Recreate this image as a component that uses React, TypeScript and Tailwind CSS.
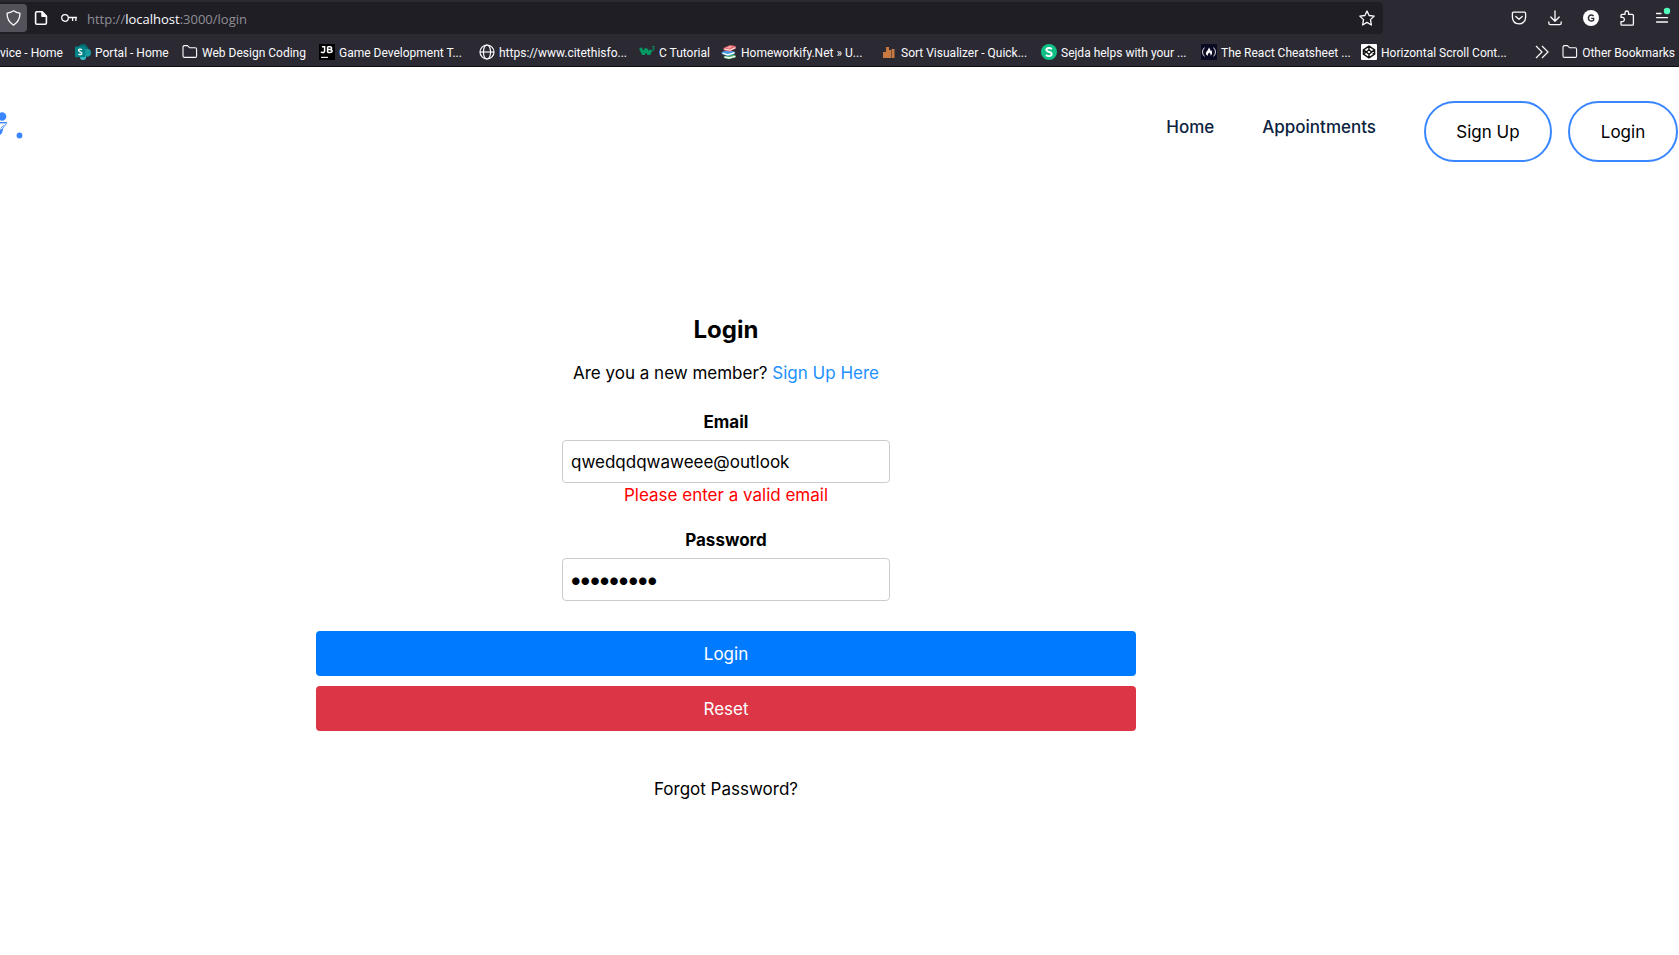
import type { ReactNode } from "react";

type Bookmark = { label: string; width: string; icon: ReactNode };

const FolderIcon = () => (
  <svg className="size-4 shrink-0" viewBox="0 0 16 16" fill="none" stroke="#fbfbfe" strokeWidth="1.1">
    <path d="M1 3.2Q1 1.6 2.6 1.6H5.4L7.6 3.8H13.2Q14.6 3.8 14.6 5.2V12Q14.6 13.4 13.2 13.4H2.4Q1 13.4 1 12Z" />
  </svg>
);

const SharePointIcon = () => (
  <svg className="size-4 shrink-0" viewBox="0 0 16 16">
    <circle cx="8" cy="5" r="5" fill="#036c70" />
    <circle cx="12" cy="8.7" r="4" fill="#1a9ba1" />
    <circle cx="8" cy="13" r="3" fill="#37c6d0" />
    <rect x="0" y="2.6" width="10.4" height="10.6" rx="0.8" fill="#038387" />
    <path d="M7 5.6Q4 4.4 3.6 6.2Q3.6 7.3 5.2 7.8Q7.2 8.5 6.9 9.7Q6.2 11.2 3.4 10.1" fill="none" stroke="#fff" strokeWidth="1.4" />
  </svg>
);

const JetBrainsIcon = () => (
  <svg className="size-4 shrink-0" viewBox="0 0 16 16">
    <rect width="16" height="16" fill="#000" />
    <path d="M3 2.8H5.6V7.2Q5.4 8.8 3.6 8.6Q2.6 8.6 2 7.8M8.6 2.8V8.6M8.6 2.8H11Q12.8 3 12.6 4.3Q12.4 5.5 10.8 5.6H8.8M10.8 5.6Q13.3 5.7 13.2 7.2Q13 8.6 11 8.6H8.6" fill="none" stroke="#fff" strokeWidth="1.5" />
    <rect x="2" y="12.8" width="7" height="1.1" fill="#fff" />
  </svg>
);

const GlobeIcon = () => (
  <svg className="size-4 shrink-0" viewBox="0 0 16 16" fill="none" stroke="#fbfbfe" strokeWidth="1.2">
    <circle cx="8" cy="8" r="7" />
    <ellipse cx="8" cy="8" rx="3.6" ry="7" />
    <path d="M1 8H15" />
  </svg>
);

const W3Icon = () => (
  <svg className="size-4 shrink-0" viewBox="0 0 16 16" fill="none" stroke="#059862">
    <path d="M1.4 4L4.4 10.4L7 5L9.8 10.4L12 6" strokeWidth="3" strokeLinejoin="bevel" />
    <path d="M13 2.6H15.2L14 4.3Q15.6 4.5 15 5.8Q14.2 6.6 13 6" strokeWidth="0.9" />
  </svg>
);

const BooksIcon = () => (
  <svg className="size-4 shrink-0" viewBox="0 0 16 16">
    <path d="M3 12L11 9.6L14.6 11.2V13.4L8 15.2L2.6 14Z" fill="#4cae6a" />
    <path d="M3.6 13L8 14L14.4 12.4" stroke="#fff" strokeWidth="1.3" fill="none" />
    <path d="M0.6 8L5 6.4L13.6 7.4V9.8L7 12L0.8 10Z" fill="#4a9ce0" />
    <path d="M1.6 9.3L7 10.8L13.6 8.6" stroke="#fff" strokeWidth="1.4" fill="none" />
    <path d="M2.4 4L9 1L14.6 2V4.6L9 7.4L2.8 6.2Z" fill="#e2646a" />
    <path d="M3.4 5.2L9 6.2L14.4 3.6" stroke="#fbdcdc" strokeWidth="1.2" fill="none" />
    <path d="M5 3.7L9.2 2L12.4 2.6L8 4.4Z" fill="#f3a3a3" />
  </svg>
);

const BarsIcon = () => (
  <svg className="size-4 shrink-0" viewBox="0 0 16 16" fill="#c87941">
    <rect x="2" y="8" width="3" height="6" />
    <rect x="5" y="3" width="3" height="11" />
    <rect x="8" y="6" width="2" height="8" />
    <rect x="10.5" y="5" width="3" height="9" />
  </svg>
);

const SejdaIcon = () => (
  <svg className="size-4 shrink-0" viewBox="0 0 16 16">
    <circle cx="8" cy="8" r="8" fill="#10bf85" />
    <path d="M11 4.9Q7.6 3.1 5.7 4.7Q4.6 6.6 7.2 7.6L9.4 8.4Q11.6 9.8 10.1 11.5Q7.8 12.9 4.8 11.1" fill="none" stroke="#fff" strokeWidth="1.9" />
  </svg>
);

const FreeCodeCampIcon = () => (
  <svg className="size-4 shrink-0" viewBox="0 0 16 16">
    <rect width="16" height="16" fill="#0a0a23" />
    <path d="M3.4 3.6Q-0.4 8 3.4 12.4M12.6 3.6Q16.4 8 12.6 12.4" fill="none" stroke="#dfdfe2" strokeWidth="1" />
    <path d="M8 3.6Q9.4 5.2 9.6 7Q10.4 6.7 10.3 6Q12.2 9.6 9.6 11.8Q10 9.6 8.2 8.6Q6.4 9.8 6.8 11.8Q3.6 10.4 5.6 7.4Q7.4 5.8 8 3.6Z" fill="#fff" />
  </svg>
);

const CodePenIcon = () => (
  <svg className="size-4 shrink-0" viewBox="0 0 16 16">
    <rect width="16" height="16" rx="1" fill="#fff" />
    <path d="M8 2.2L13.6 5.8V10.2L8 13.8L2.4 10.2V5.8ZM8 2.2V5.8M8 10.2V13.8M2.4 5.8L8 10.2L13.6 5.8M2.4 10.2L8 5.8L13.6 10.2" fill="none" stroke="#111" strokeWidth="1.4" strokeLinejoin="round" />
  </svg>
);

const bookmarks: Bookmark[] = [
  { label: "Portal - Home", width: "w-[107px]", icon: <SharePointIcon /> },
  { label: "Web Design Coding", width: "w-[137px]", icon: <FolderIcon /> },
  { label: "Game Development T...", width: "w-40", icon: <JetBrainsIcon /> },
  { label: "https://www.citethisfo...", width: "w-40", icon: <GlobeIcon /> },
  { label: "C Tutorial", width: "w-[82px]", icon: <W3Icon /> },
  { label: "Homeworkify.Net » U...", width: "w-40", icon: <BooksIcon /> },
  { label: "Sort Visualizer - Quick...", width: "w-40", icon: <BarsIcon /> },
  { label: "Sejda helps with your ...", width: "w-40", icon: <SejdaIcon /> },
  { label: "The React Cheatsheet ...", width: "w-40", icon: <FreeCodeCampIcon /> },
  { label: "Horizontal Scroll Cont...", width: "w-40", icon: <CodePenIcon /> },
];

function AddressRow() {
  return (
    <div className="flex h-8 items-center justify-between">
      <div className="mr-32 flex h-8 min-w-0 flex-1 items-center rounded-r bg-[#1f1e25]">
        <button aria-label="Tracking protection" className="flex h-7 w-[27px] items-center justify-center rounded-r bg-[#53525a]">
          <svg className="size-4" viewBox="0 0 16 16" fill="none" stroke="#fbfbfe" strokeWidth="1.3">
            <path d="M7.5 .8Q10.5 3 13.9 3.2Q14.3 10.6 7.5 15.2Q.7 10.6 1.1 3.2Q4.5 3 7.5 .8Z" strokeLinejoin="round" />
          </svg>
        </button>
        <button aria-label="Site information" className="ml-1.5 flex size-4 items-center justify-center">
          <svg className="size-4" viewBox="0 0 16 16" fill="none" stroke="#fbfbfe" strokeWidth="1.6" strokeLinejoin="round">
            <path d="M9 1.8H3.8Q2.6 1.8 2.6 3V13Q2.6 14.2 3.8 14.2H12.2Q13.4 14.2 13.4 13V6.2Z" />
            <path d="M9 1.8V6.2H13.4Z" fill="#fbfbfe" />
          </svg>
        </button>
        <button aria-label="Saved logins" className="ml-3 flex size-4 items-center justify-center">
          <svg className="size-4" viewBox="0 0 16 16" fill="none" stroke="#fbfbfe" strokeWidth="1.3">
            <circle cx="4" cy="8" r="3.3" />
            <path d="M7.3 7.5H16M11.6 7.5V11M14.9 7.5V11" />
          </svg>
        </button>
        <div role="textbox" aria-label="Address" className="ml-2.5 flex-1 pt-0.5 text-[13px] leading-5 text-[#8f8e96]">
          http://<span className="text-[#fbfbfe]">localhost</span>:3000/login
        </div>
        <button aria-label="Bookmark this page" className="mr-2 flex size-4 items-center justify-center">
          <svg className="size-4" viewBox="0 0 16 16" fill="none" stroke="#fbfbfe" strokeWidth="1.3" strokeLinejoin="round">
            <path d="M8 1L10.1 5.5L15.2 6.1L11.5 9.6L12.4 15L8 12.4L3.6 15L4.5 9.6L.8 6.1L5.9 5.5Z" />
          </svg>
        </button>
      </div>
      <div className="flex items-center gap-5 pr-2">
        <button aria-label="Pocket" className="size-4">
          <svg className="size-4" viewBox="0 0 16 16" fill="none" stroke="#fbfbfe" strokeWidth="1.3" strokeLinecap="round" strokeLinejoin="round">
            <path d="M2.6 2.2H13.4Q14.6 2.2 14.6 3.4V7.4Q14.2 13.6 8 13.9Q1.8 13.6 1.4 7.4V3.4Q1.4 2.2 2.6 2.2Z" />
            <path d="M4.8 6.4L8 9.3L11.2 6.4" />
          </svg>
        </button>
        <button aria-label="Downloads" className="size-4">
          <svg className="size-4" viewBox="0 0 16 16" fill="none" stroke="#fbfbfe" strokeWidth="1.3" strokeLinecap="round" strokeLinejoin="round">
            <path d="M8 1V11M3.8 7L8 11.2L12.2 7M1.8 12V13Q1.8 14.6 3.4 14.6H12.6Q14.2 14.6 14.2 13V12" />
          </svg>
        </button>
        <button aria-label="Account" className="size-4">
          <svg className="size-4" viewBox="0 0 16 16">
            <circle cx="8" cy="8" r="8" fill="#fff" />
            <path d="M10.6 6Q8.3 4 6.2 5.8Q4.6 8 6.2 10.2Q8.4 11.9 10.6 10.2V8.4H8.2" fill="none" stroke="#2b2a33" strokeWidth="1.4" />
          </svg>
        </button>
        <button aria-label="Extensions" className="size-4">
          <svg className="size-4" viewBox="0 0 16 16" fill="none" stroke="#fbfbfe" strokeWidth="1.3" strokeLinejoin="round">
            <path d="M2 7.4V5.4Q2 4.4 3 4.4H6V2.8Q6.2 1 7.8 1Q9.4 1 9.6 2.8V4.4H13.2Q14.4 4.4 14.4 5.6V14Q14.4 15.2 13.2 15.2H3Q2 15.2 2 14.2V11.6H3.8Q5.4 11.2 5.4 9.5Q5.4 7.8 3.8 7.4Z" />
          </svg>
        </button>
        <button aria-label="Application menu" className="size-4">
          <svg className="size-4 overflow-visible" viewBox="0 0 16 16" fill="none" stroke="#fbfbfe" strokeWidth="1.3" strokeLinecap="round">
            <path d="M1.6 3.5H6M1.6 7.7H12.5M1.6 12H12.5" />
            <circle cx="12" cy="1" r="3.2" fill="#54ffbd" stroke="none" />
          </svg>
        </button>
      </div>
    </div>
  );
}

function BookmarksRow() {
  return (
    <div className="flex h-8 items-center pt-1 font-['Roboto',sans-serif] text-xs leading-4 whitespace-nowrap text-[#fbfbfe]">
      <a href="#service" className="flex w-[75px] shrink-0 overflow-hidden pt-px">
        <span>vice - Home</span>
      </a>
      {bookmarks.map((b) => (
        <a key={b.label} href="#bookmark" className={`flex shrink-0 items-center gap-1 ${b.width}`}>
          {b.icon}
          <span className="pt-px">{b.label}</span>
        </a>
      ))}
      <button aria-label="More bookmarks" className="ml-auto size-4">
        <svg className="size-4" viewBox="0 0 16 16" fill="none" stroke="#fbfbfe" strokeWidth="1.2">
          <path d="M2 2L8 8L2 14M8 2L14 8L8 14" />
        </svg>
      </button>
      <a href="#other" className="mr-1 ml-3 flex items-center gap-1">
        <FolderIcon />
        <span className="pt-px">Other Bookmarks</span>
      </a>
    </div>
  );
}

function SiteNav() {
  return (
    <nav className="flex items-start justify-between pt-[34px] pr-px text-[17px] leading-6">
      <a href="#home" aria-label="Homepage">
        <svg className="h-12 w-6" viewBox="0 0 24 48" fill="#3a86ff">
          <circle cx="2" cy="15.5" r="4.3" />
          <path d="M0 21H6.8V22.4H0Z" />
          <path d="M0 28.6L3.2 27.8L2.4 31Q1.4 33.6 0 34Z" />
          <path d="M6.5 22.4L2 28.4M3.6 24.6L0.6 27.4" fill="none" stroke="#3a86ff" strokeWidth="0.9" />
          <circle cx="19.5" cy="34.5" r="2.9" />
        </svg>
      </a>
      <div className="flex items-start">
        <a href="#home" className="mt-3.5 mr-12 font-medium text-[#0c2340]">Home</a>
        <a href="#appointments" className="mt-3.5 mr-12 font-medium text-[#0c2340]">Appointments</a>
        <button className="mr-4 h-[61px] w-32 rounded-full border-2 border-[#3a86ff] text-black">Sign Up</button>
        <button className="h-[61px] w-[110px] rounded-full border-2 border-[#3a86ff] text-black">Login</button>
      </div>
    </nav>
  );
}

function LoginForm() {
  return (
    <main className="flex flex-col items-center pt-[150px] pr-[543px] pl-[316px] text-[17px] leading-6 text-black">
      <h1 className="text-2xl leading-9 font-bold">Login</h1>
      <p className="mt-[13px]">
        Are you a new member?{" "}
        <a href="#signup" className="text-[#1e90ff]">Sign Up Here</a>
      </p>
      <form className="mt-[25px] flex w-full flex-col items-center" onSubmit={(e) => e.preventDefault()}>
        <label htmlFor="email" className="leading-6 font-bold">Email</label>
        <input id="email" type="text" defaultValue="qwedqdqwaweee@outlook" className="mt-1.5 h-[43px] w-2/5 rounded border border-[#ccc] px-2" />
        <p className="text-[#ff0000]">Please enter a valid email</p>
        <label htmlFor="password" className="mt-[21px] leading-6 font-bold">Password</label>
        <input id="password" type="password" defaultValue="ninechars" className="mt-1.5 h-[43px] w-2/5 rounded border border-[#ccc] px-2 text-2xl font-black" />
        <button type="submit" className="mt-[30px] h-[45px] w-full rounded bg-[#007bff] text-white">Login</button>
        <button type="button" className="mt-2.5 h-[45px] w-full rounded bg-[#dc3545] text-white">Reset</button>
      </form>
      <a href="#forgot" className="mt-[46px]">Forgot Password?</a>
    </main>
  );
}

export default function App() {
  return (
    <div className="min-h-screen overflow-x-hidden bg-white font-['Inter',sans-serif]">
      <header className="border-b border-[#0c0c0d] bg-[#2b2a33] pt-0.5 font-['Open_Sans',sans-serif]">
        <AddressRow />
        <BookmarksRow />
      </header>
      <SiteNav />
      <LoginForm />
    </div>
  );
}
